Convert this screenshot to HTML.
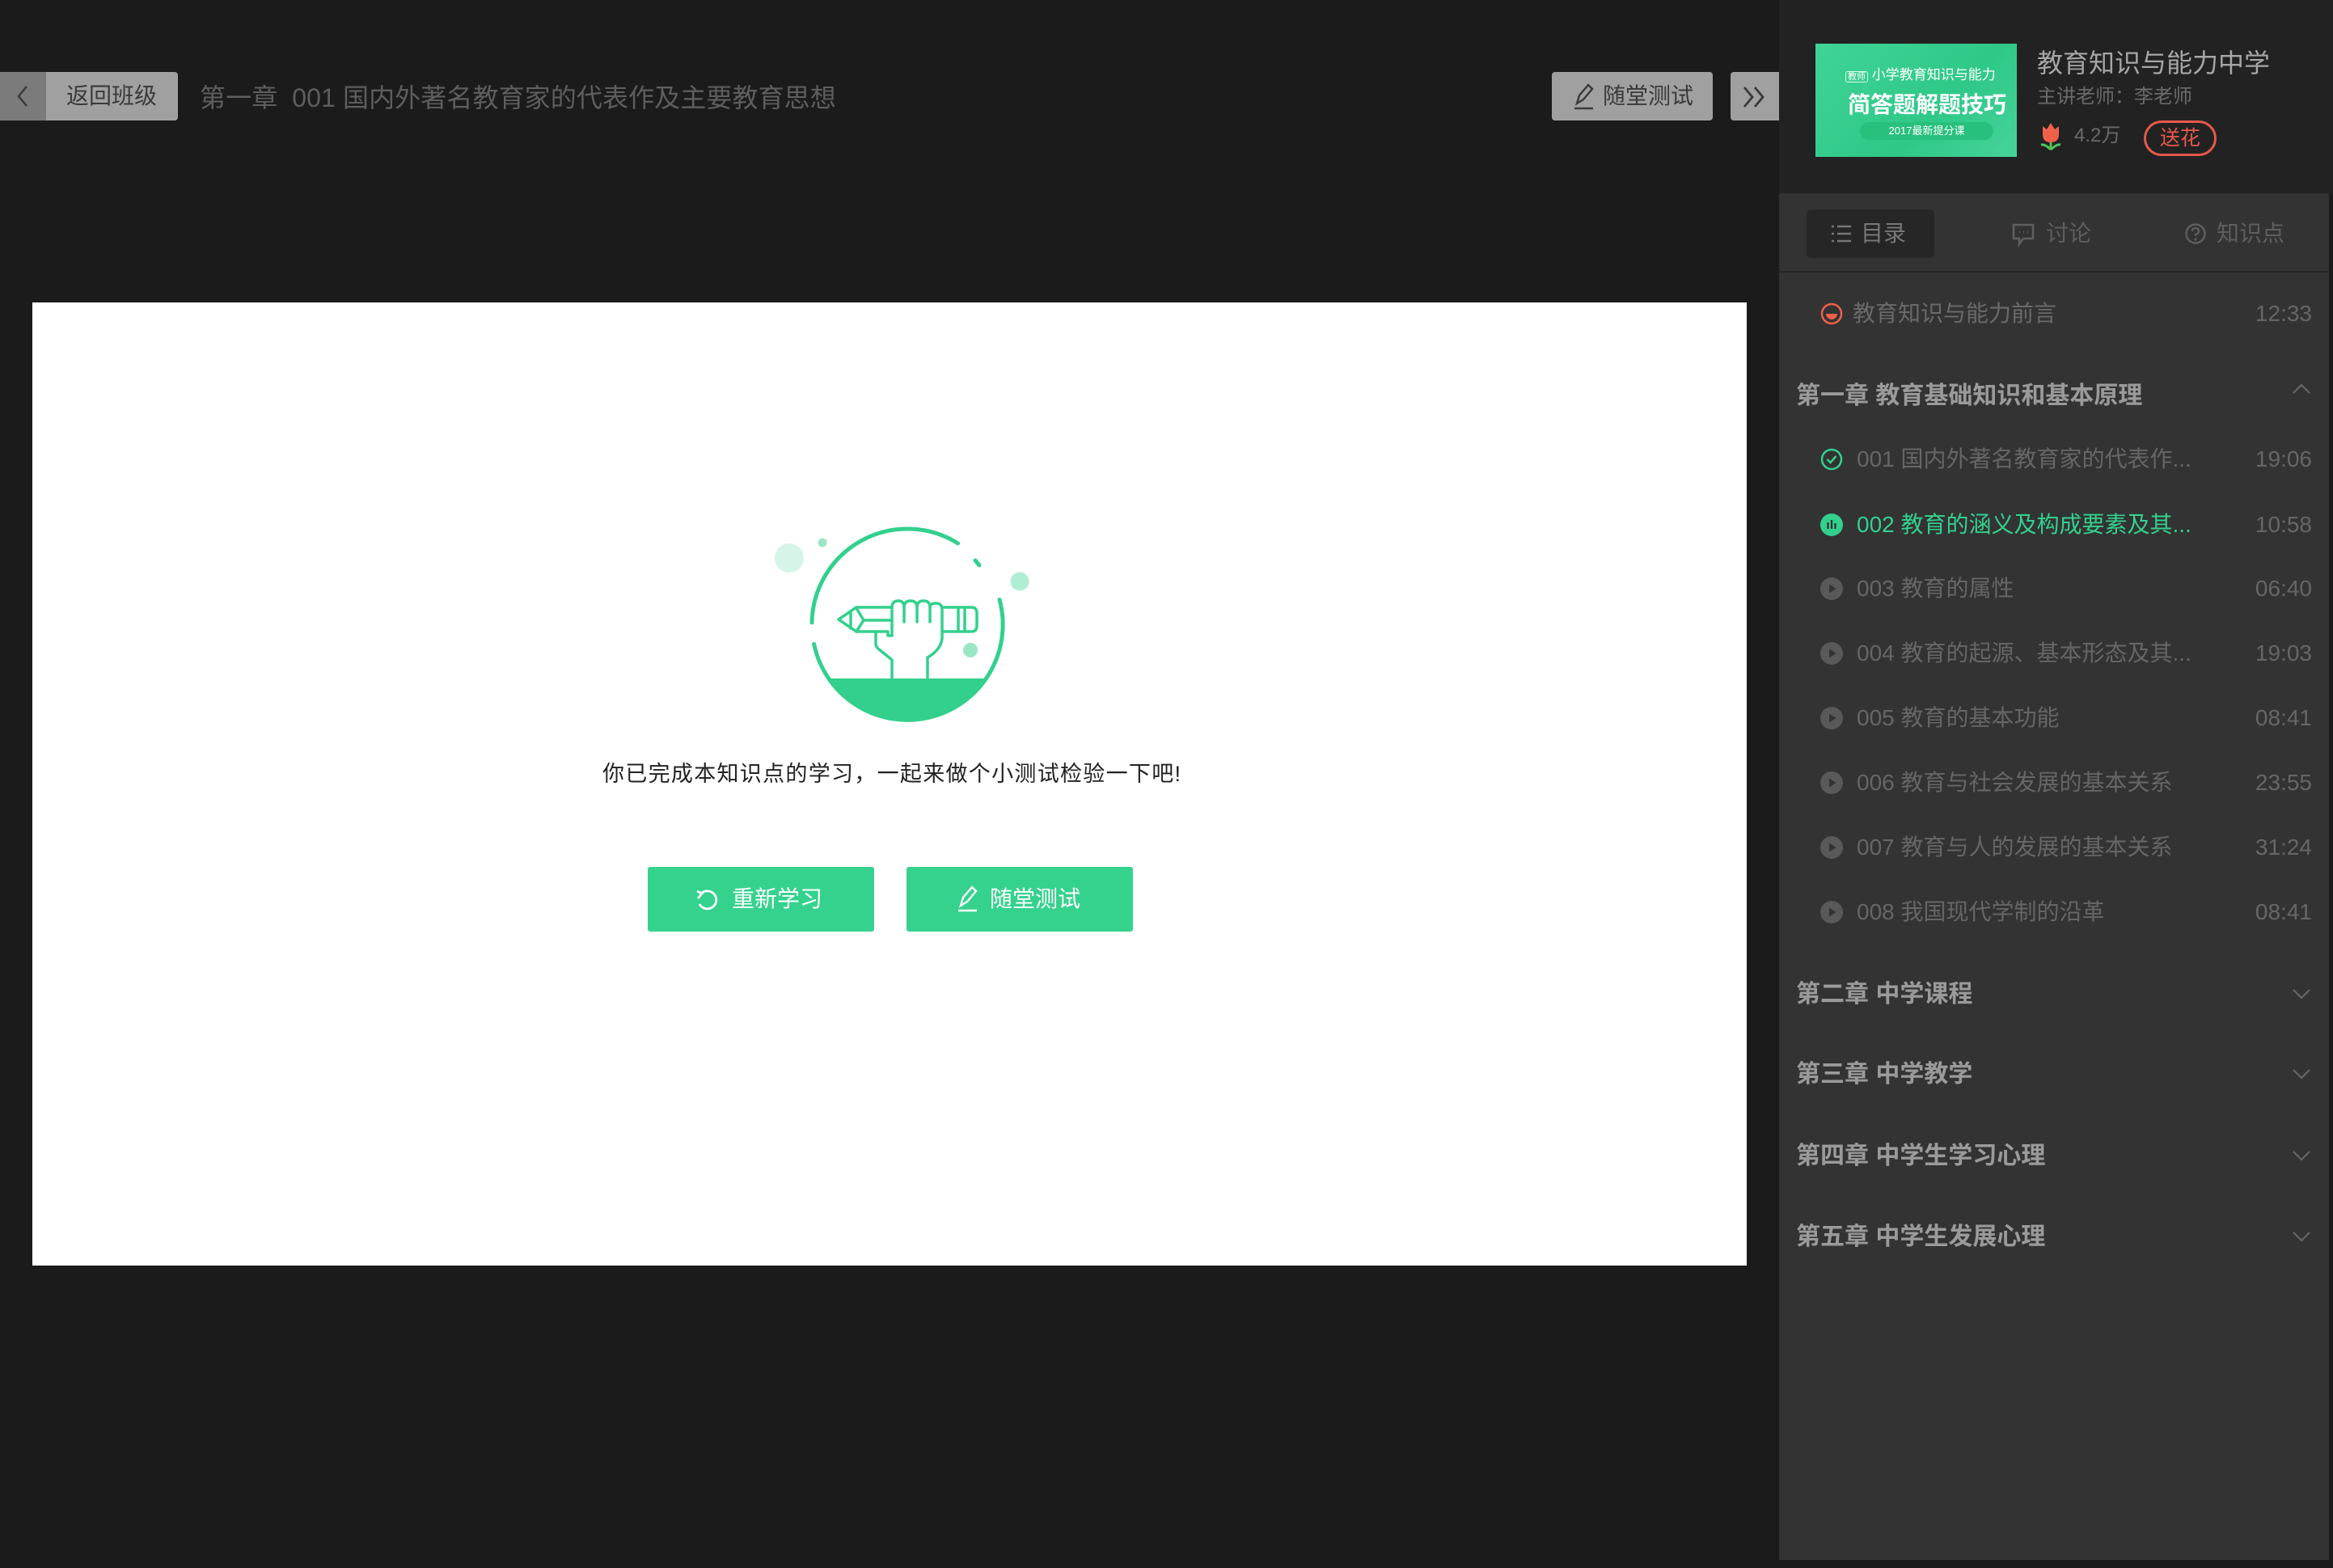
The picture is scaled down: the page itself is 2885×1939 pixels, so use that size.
<!DOCTYPE html>
<html><head><meta charset="utf-8"><style>
*{margin:0;padding:0;box-sizing:border-box}
body{width:2885px;height:1939px;background:#1b1b1b;position:relative;overflow:hidden;font-family:"Liberation Sans","Noto Sans CJK SC",sans-serif}
.a{position:absolute;white-space:nowrap}
.row{position:absolute;left:2200px;width:680px;height:60px;line-height:60px}
.it{position:absolute;left:96px;font-size:28px;color:#666}
.tm{position:absolute;right:21px;font-size:28px;color:#666}
.ch{position:absolute;left:21px;font-size:30px;color:#9a9a9a;font-weight:bold}
.ic{position:absolute;left:51px;top:16px;width:28px;height:28px}
.chev{position:absolute;right:22px;top:18px;width:24px;height:24px}
</style></head><body>

<div class="a" style="left:0;top:89px;width:220px;height:60px;background:#a0a0a0;border-radius:0 4px 4px 0"></div>
<div class="a" style="left:0;top:89px;width:57px;height:60px;background:#7b7b7b"></div>
<svg class="a" style="left:18px;top:104px" width="20" height="30" viewBox="0 0 20 30"><path d="M15 3 L5 15 L15 27" fill="none" stroke="#3a3a3a" stroke-width="2.5"/></svg>
<div class="a" style="left:82px;top:89px;line-height:60px;font-size:28px;color:#3a3a3a">返回班级</div>
<div class="a" style="left:247px;top:99px;line-height:44px;font-size:32px;letter-spacing:0.1px;color:#5e5e5e">第一章&nbsp;&nbsp;001 国内外著名教育家的代表作及主要教育思想</div>

<div class="a" style="left:1919px;top:89px;width:199px;height:60px;background:#a0a0a0;border-radius:4px"></div>
<svg class="a" style="left:1944px;top:101px" width="30" height="36" viewBox="0 0 30 36"><path d="M6 27 L9 17 L20 4 L25 9 L14 22 Z M3 33 H26" fill="none" stroke="#3a3a3a" stroke-width="2.4"/></svg>
<div class="a" style="left:1982px;top:89px;line-height:60px;font-size:28px;color:#3a3a3a">随堂测试</div>
<div class="a" style="left:2140px;top:89px;width:60px;height:60px;background:#a0a0a0;border-radius:4px 0 0 4px"></div>
<svg class="a" style="left:2152px;top:105px" width="36" height="30" viewBox="0 0 36 30"><path d="M5 3 L15 15 L5 27 M18 3 L28 15 L18 27" fill="none" stroke="#3a3a3a" stroke-width="2.8"/></svg>

<div class="a" style="left:40px;top:374px;width:2120px;height:1191px;background:#fff"></div>
<svg class="a" style="left:900px;top:620px" width="450" height="300" viewBox="0 0 450 300">
<circle cx="76" cy="70" r="18" fill="#d6f5e8"/>
<circle cx="117" cy="51" r="5.5" fill="#9be6c5"/>
<circle cx="361" cy="99" r="11.5" fill="#b0eed3"/>
<circle cx="300" cy="184" r="9" fill="#9be6c5"/>
<path d="M124.9 219 L319.1 219 A118 118 0 0 1 124.9 219 Z" fill="#33d08d"/>
<g fill="none" stroke="#33d08d" stroke-width="5" stroke-linecap="round">
<path d="M104 149.9 A118 118 0 0 1 284.5 51.9"/>
<path d="M306 73 L311 79"/>
<path d="M336 121.5 A118 118 0 1 1 106.6 176.5"/>
</g>
<g fill="none" stroke="#33d08d" stroke-width="3.5" stroke-linejoin="round" stroke-linecap="round">
<path d="M203 131 H159 L137 146 L159 161 H198 V166 H203"/>
<path d="M159 132 L168 147 L159 161 M152 136 V157 M168 147 H203"/>
<path d="M265 131 H301 Q308 131 308 138 V154 Q308 161 301 161 H265 M285 131 V161 M293 131 V161"/>
<path d="M203 166 V131 Q203 123 211 123 Q218 123 218 131 Q218 123 226 123 Q234 123 234 131 Q234 123 242 123 Q250 123 250 131 Q250 126 257 126 Q265 126 265 134 V170 Q263 184 247 193 V219"/>
<path d="M218 131 V149 M234 131 V149 M250 131 V149"/>
<path d="M183 162 V176 Q183 180 187 183 L203 196 V219"/>
</g>
</svg>
<div class="a" style="left:745px;top:937px;line-height:40px;font-size:27px;letter-spacing:1.3px;color:#222">你已完成本知识点的学习，一起来做个小测试检验一下吧!</div>

<div class="a" style="left:801px;top:1072px;width:280px;height:80px;background:#35d28e;border-radius:3px"></div>
<svg class="a" style="left:858px;top:1096px" width="34" height="34" viewBox="0 0 34 34"><path d="M9 9 A11 11 0 1 1 7 22" fill="none" stroke="#fff" stroke-width="2.8"/><path d="M4 6 L10 9 L5 15" fill="none" stroke="#fff" stroke-width="2.8"/></svg>
<div class="a" style="left:905px;top:1072px;line-height:80px;font-size:28px;color:#fff">重新学习</div>
<div class="a" style="left:1121px;top:1072px;width:280px;height:80px;background:#35d28e;border-radius:3px"></div>
<svg class="a" style="left:1182px;top:1093px" width="30" height="36" viewBox="0 0 30 36"><path d="M6 27 L9 17 L20 4 L25 9 L14 22 Z M3 33 H26" fill="none" stroke="#fff" stroke-width="2.4"/></svg>
<div class="a" style="left:1224px;top:1072px;line-height:80px;font-size:28px;color:#fff">随堂测试</div>

<div class="a" style="left:2200px;top:0;width:685px;height:239px;background:#222"></div>
<div class="a" style="left:2245px;top:54px;width:249px;height:140px;background:linear-gradient(135deg,#3fd496,#2fc887 60%,#46d39a);overflow:hidden">
 <div class="a" style="left:37px;top:24px;font-size:17px;color:#fff"><span style="border:1px solid #d8fbe9;border-radius:3px;font-size:11px;padding:0 2px">教师</span> 小学教育知识与能力</div>
 <div class="a" style="left:40px;top:54px;font-size:28px;font-weight:bold;color:#fff">简答题解题技巧</div>
 <div class="a" style="left:55px;top:97px;width:165px;height:22px;border-radius:11px;background:#27c07c;color:#fff;font-size:13px;line-height:22px;text-align:center">2017最新提分课</div>
</div>
<div class="a" style="left:2519px;top:56px;line-height:44px;font-size:32px;color:#a6a6a6">教育知识与能力中学</div>
<div class="a" style="left:2519px;top:104px;line-height:32px;font-size:24px;color:#6a6a6a">主讲老师：李老师</div>
<svg class="a" style="left:2519px;top:150px" width="34" height="36" viewBox="0 0 34 36"><path d="M7 6 L12 10 L17 2 L22 10 L27 6 L27 16 Q27 26 17 26 Q7 26 7 16 Z" fill="#f0604a"/><path d="M17 26 V35 M17 35 Q10 28 5 29 M17 35 Q24 28 29 29" stroke="#4fc45a" stroke-width="3" fill="none"/></svg>
<div class="a" style="left:2565px;top:152px;line-height:32px;font-size:24px;color:#6a6a6a">4.2万</div>
<div class="a" style="left:2651px;top:149px;width:90px;height:44px;border:3px solid #e8584a;border-radius:22px;color:#e8584a;font-size:25px;line-height:38px;text-align:center">送花</div>

<div class="a" style="left:2200px;top:239px;width:680px;height:1690px;background:#333"></div>
<div class="a" style="left:2200px;top:335px;width:680px;height:2px;background:#262626"></div>
<div class="a" style="left:2234px;top:259px;width:158px;height:60px;background:#262626;border-radius:6px"></div>
<svg class="a" style="left:2263px;top:276px" width="28" height="26" viewBox="0 0 28 26"><path d="M2 4h3M9 4h17M2 13h3M9 13h17M2 22h3M9 22h17" stroke="#777" stroke-width="2.6"/></svg>
<div class="a" style="left:2301px;top:268px;line-height:42px;font-size:28px;color:#777">目录</div>
<svg class="a" style="left:2488px;top:276px" width="28" height="30" viewBox="0 0 28 30"><path d="M2 2H26V19H14L9 26V19H2Z" fill="none" stroke="#5e5e5e" stroke-width="2.6"/><path d="M9 11h1M14 11h1M19 11h1" stroke="#5e5e5e" stroke-width="2.6"/></svg>
<div class="a" style="left:2530px;top:268px;line-height:42px;font-size:28px;color:#5e5e5e">讨论</div>
<svg class="a" style="left:2701px;top:275px" width="28" height="28" viewBox="0 0 28 28"><circle cx="14" cy="14" r="11.5" fill="none" stroke="#5e5e5e" stroke-width="2.5"/><path d="M10 11 Q10 7 14 7 Q18 7 18 11 Q18 14 14 15 V17" fill="none" stroke="#5e5e5e" stroke-width="2.3"/><circle cx="14" cy="21" r="1.6" fill="#5e5e5e"/></svg>
<div class="a" style="left:2741px;top:268px;line-height:42px;font-size:28px;color:#5e5e5e">知识点</div>

<div class="row" style="top:358px">
 <svg class="ic" style="left:51px" viewBox="0 0 28 28"><circle cx="14" cy="14" r="12" fill="none" stroke="#f0604a" stroke-width="2.5"/><path d="M7 14 H21 A7 7 0 0 1 7 14Z" fill="#f0604a"/></svg>
 <div class="it" style="left:91px;color:#6a6a6a">教育知识与能力前言</div><div class="tm">12:33</div></div>
<div class="row" style="top:460px"><div class="ch">第一章 教育基础知识和基本原理</div>
 <svg class="chev" style="top:8px" viewBox="0 0 24 24"><path d="M2 18 L12 8 L22 18" fill="none" stroke="#666" stroke-width="2.2"/></svg></div>
<div class="row" style="top:538px">
 <svg class="ic" viewBox="0 0 28 28"><circle cx="14" cy="14" r="12" fill="none" stroke="#33d08d" stroke-width="2.5"/><path d="M8.5 14 L12.5 18 L19.5 10" fill="none" stroke="#33d08d" stroke-width="2.5"/></svg>
 <div class="it">001 国内外著名教育家的代表作...</div><div class="tm">19:06</div></div>
<div class="row" style="top:619px">
 <svg class="ic" viewBox="0 0 28 28"><circle cx="14" cy="14" r="14" fill="#33d08d"/><path d="M9.5 11v8M14 8v11M18.5 12v7" stroke="#333" stroke-width="2.3"/></svg>
 <div class="it" style="color:#33d08d">002 教育的涵义及构成要素及其...</div><div class="tm">10:58</div></div>
<div class="row" style="top:698px"><svg class="ic" viewBox="0 0 28 28"><circle cx="14" cy="14" r="14" fill="#595959"/><path d="M11 8.5 L19.5 14 L11 19.5Z" fill="#333"/></svg><div class="it">003 教育的属性</div><div class="tm">06:40</div></div>
<div class="row" style="top:778px"><svg class="ic" viewBox="0 0 28 28"><circle cx="14" cy="14" r="14" fill="#595959"/><path d="M11 8.5 L19.5 14 L11 19.5Z" fill="#333"/></svg><div class="it">004 教育的起源、基本形态及其...</div><div class="tm">19:03</div></div>
<div class="row" style="top:858px"><svg class="ic" viewBox="0 0 28 28"><circle cx="14" cy="14" r="14" fill="#595959"/><path d="M11 8.5 L19.5 14 L11 19.5Z" fill="#333"/></svg><div class="it">005 教育的基本功能</div><div class="tm">08:41</div></div>
<div class="row" style="top:938px"><svg class="ic" viewBox="0 0 28 28"><circle cx="14" cy="14" r="14" fill="#595959"/><path d="M11 8.5 L19.5 14 L11 19.5Z" fill="#333"/></svg><div class="it">006 教育与社会发展的基本关系</div><div class="tm">23:55</div></div>
<div class="row" style="top:1018px"><svg class="ic" viewBox="0 0 28 28"><circle cx="14" cy="14" r="14" fill="#595959"/><path d="M11 8.5 L19.5 14 L11 19.5Z" fill="#333"/></svg><div class="it">007 教育与人的发展的基本关系</div><div class="tm">31:24</div></div>
<div class="row" style="top:1098px"><svg class="ic" viewBox="0 0 28 28"><circle cx="14" cy="14" r="14" fill="#595959"/><path d="M11 8.5 L19.5 14 L11 19.5Z" fill="#333"/></svg><div class="it">008 我国现代学制的沿革</div><div class="tm">08:41</div></div>
<div class="row" style="top:1200px"><div class="ch">第二章 中学课程</div><svg class="chev" viewBox="0 0 24 24"><path d="M2 6 L12 16 L22 6" fill="none" stroke="#666" stroke-width="2.2"/></svg></div>
<div class="row" style="top:1299px"><div class="ch">第三章 中学教学</div><svg class="chev" viewBox="0 0 24 24"><path d="M2 6 L12 16 L22 6" fill="none" stroke="#666" stroke-width="2.2"/></svg></div>
<div class="row" style="top:1400px"><div class="ch">第四章 中学生学习心理</div><svg class="chev" viewBox="0 0 24 24"><path d="M2 6 L12 16 L22 6" fill="none" stroke="#666" stroke-width="2.2"/></svg></div>
<div class="row" style="top:1500px"><div class="ch">第五章 中学生发展心理</div><svg class="chev" viewBox="0 0 24 24"><path d="M2 6 L12 16 L22 6" fill="none" stroke="#666" stroke-width="2.2"/></svg></div>
</body></html>
